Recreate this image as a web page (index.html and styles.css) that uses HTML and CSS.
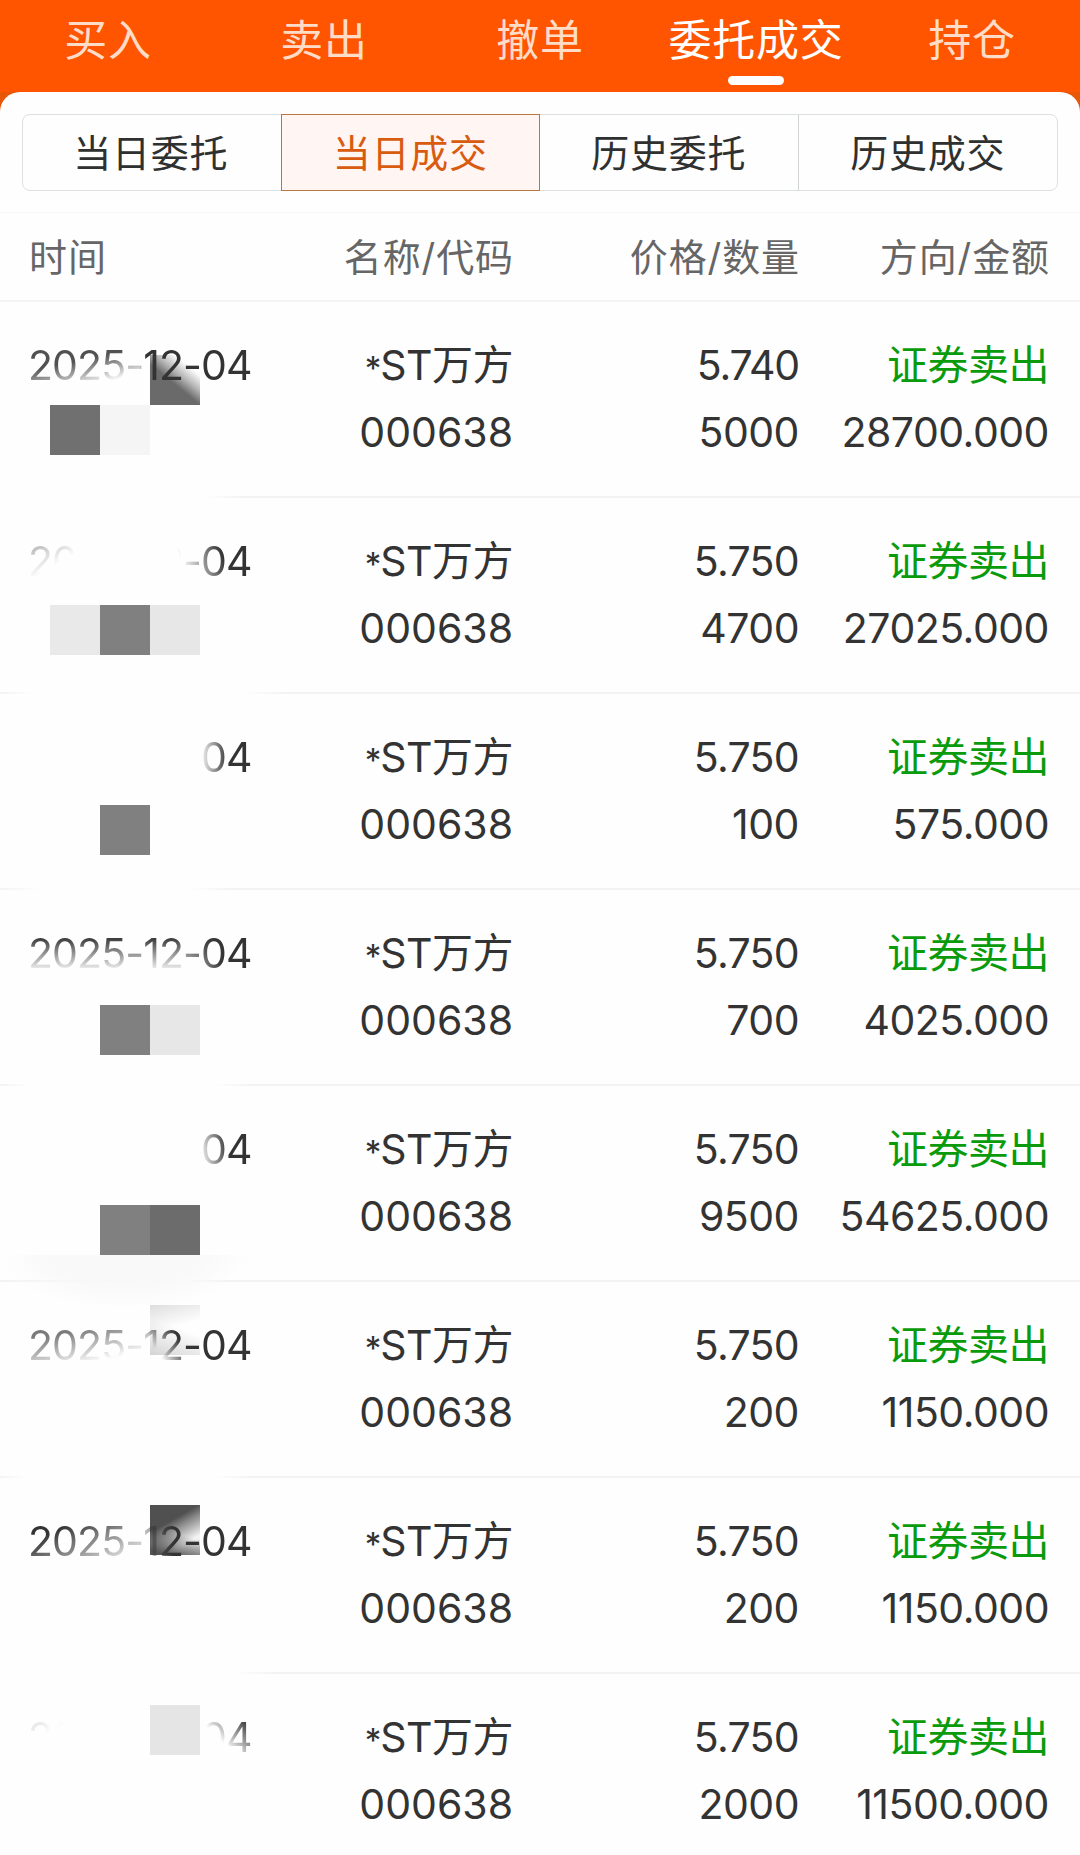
FILE: index.html
```html
<!DOCTYPE html>
<html lang="zh-CN">
<head>
    <meta charset="UTF-8">
    <meta name="viewport" content="width=device-width, initial-scale=1.0">
    <title>委托成交</title>
    <link rel="stylesheet" href="styles.css">
</head>
<body>
    <header>
        <nav class="nav">
            <a>买入</a>
            <a>卖出</a>
            <a>撤单</a>
            <a class="current">委托成交</a>
            <a>持仓</a>
        </nav>
    </header>

    <main>
        <div class="tabs">
            <button>当日委托</button>
            <button class="active">当日成交</button>
            <button>历史委托</button>
            <button>历史成交</button>
        </div>

        <div class="grid table-head">
            <span>时间</span>
            <span>名称/代码</span>
            <span>价格/数量</span>
            <span>方向/金额</span>
        </div>

        <div class="table">
            <!-- mosaic blocks that hide the exact times -->
            <div class="mosaic">
                <i class="m1"></i>
                <i class="m2"></i>
                <i class="m3"></i>
                <i class="m4"></i>
                <i class="m5"></i>
                <i class="m6"></i>
                <i class="m7"></i>
                <i class="m8"></i>
                <i class="m9"></i>
                <i class="m10"></i>
                <i class="m11"></i>
                <i class="m12"></i>
                <i class="m13"></i>
                <i class="m14"></i>
                <i class="m15"></i>
            </div>

            <div class="grid row r1">
                <div><span class="date">2025-12-04</span></div>
                <div><span class="star">*</span>ST万方<br><span class="code">000638</span></div>
                <div><span class="price">5.740</span><br>5000</div>
                <div><span class="sell">证券卖出</span><br>28700.000</div>
            </div>
            <div class="grid row r2">
                <div><span class="date">2025-12-04</span></div>
                <div><span class="star">*</span>ST万方<br><span class="code">000638</span></div>
                <div><span class="price">5.750</span><br>4700</div>
                <div><span class="sell">证券卖出</span><br>27025.000</div>
            </div>
            <div class="grid row r3">
                <div><span class="date">2025-12-04</span></div>
                <div><span class="star">*</span>ST万方<br><span class="code">000638</span></div>
                <div><span class="price">5.750</span><br>100</div>
                <div><span class="sell">证券卖出</span><br>575.000</div>
            </div>
            <div class="grid row r4">
                <div><span class="date">2025-12-04</span></div>
                <div><span class="star">*</span>ST万方<br><span class="code">000638</span></div>
                <div><span class="price">5.750</span><br>700</div>
                <div><span class="sell">证券卖出</span><br>4025.000</div>
            </div>
            <div class="grid row r5">
                <div><span class="date">2025-12-04</span></div>
                <div><span class="star">*</span>ST万方<br><span class="code">000638</span></div>
                <div><span class="price">5.750</span><br>9500</div>
                <div><span class="sell">证券卖出</span><br>54625.000</div>
            </div>
            <div class="grid row r6">
                <div><span class="date">2025-12-04</span></div>
                <div><span class="star">*</span>ST万方<br><span class="code">000638</span></div>
                <div><span class="price">5.750</span><br>200</div>
                <div><span class="sell">证券卖出</span><br>1150.000</div>
            </div>
            <div class="grid row r7">
                <div><span class="date">2025-12-04</span></div>
                <div><span class="star">*</span>ST万方<br><span class="code">000638</span></div>
                <div><span class="price">5.750</span><br>200</div>
                <div><span class="sell">证券卖出</span><br>1150.000</div>
            </div>
            <div class="grid row r8">
                <div><span class="date">2025-12-04</span></div>
                <div><span class="star">*</span>ST万方<br><span class="code">000638</span></div>
                <div><span class="price">5.750</span><br>2000</div>
                <div><span class="sell">证券卖出</span><br>11500.000</div>
            </div>
        </div>
    </main>
</body>
</html>
```
FILE: styles.css
```css
* {
    box-sizing: border-box;
}

body {
    margin: 0;
    height: 1855px;
    overflow: hidden;
    background-color: #e85608;
    font-family: Inter, "Noto Sans CJK SC", sans-serif;
    color: #333;
}

header {
    height: 92px;
    background-color: #ff5500;
}

.nav {
    display: grid;
    grid-template-columns: repeat(5, 1fr);
    text-align: center;
}

.nav a {
    position: relative;
    height: 92px;
    line-height: 80px;
    font-size: 43px;
    letter-spacing: 0.7px;
    color: #ffdcc8;
}

.nav .current {
    color: #fff;
}

.nav .current::after {
    content: "";
    position: absolute;
    left: 50%;
    bottom: 7px;
    width: 56px;
    height: 9px;
    margin-left: -28px;
    border-radius: 5px;
    background-color: #fff;
}

main {
    height: 1763px;
    padding-top: 22px;
    background-color: #fefefe;
    border-radius: 20px 20px 0 0;
    overflow: hidden;
}

.tabs {
    display: grid;
    grid-template-columns: repeat(4, 1fr);
    height: 77px;
    margin: 0 22px 21px;
    border: 1px solid #dcdfdf;
    border-radius: 8px;
}

.tabs button {
    padding: 0 0 5px;
    border: 0;
    border-right: 1px solid #d0d3d3;
    background: none;
    font-family: inherit;
    font-size: 38px;
    letter-spacing: 0.8px;
    color: #2f3131;
}

.tabs button:first-child,
.tabs button:last-child {
    border-right: 0;
}

.tabs button:first-child {
    padding-right: 3px;
}

.tabs .active {
    margin: -1px 0 -1px -1px;
    border: 1px solid #b9773f;
    background-color: #fff6f3;
    color: #d95b10;
}

.grid {
    display: grid;
    grid-template-columns: 228px 257px 286px 250px;
    padding: 0 31px 0 28px;
    text-align: right;
}

.grid > :first-child {
    text-align: left;
}

.table-head {
    height: 90px;
    padding-left: 29px;
    padding-right: 30px;
    border-top: 1px solid #f7f7f7;
    border-bottom: 2px solid #f4f4f4;
    line-height: 88px;
    font-size: 38px;
    letter-spacing: 0.9px;
    color: #666;
}

.table {
    position: relative;
}

.row {
    position: relative;
    height: 196px;
    padding-top: 30px;
    font-size: 41px;
    line-height: 67px;
    letter-spacing: -0.5px;
    white-space: nowrap;
    --line: linear-gradient(to right, transparent 205px, #f3f3f3 240px);
    background: var(--line) left bottom / 100% 2px no-repeat;
}

.star {
    font-size: 33px;
    line-height: 1;
    letter-spacing: -1px;
}

.code {
    letter-spacing: 0;
}

.price {
    letter-spacing: -0.7px;
}

.r1 .price {
    letter-spacing: -1.2px;
}

.sell {
    color: #099b0b;
}

.date {
    display: inline-block;
    width: 226px;
    height: 67px;
    letter-spacing: -0.9px;
    -webkit-mask-image: var(--fade);
    mask-image: var(--fade);
}

/* how far each date is wiped out */
.r1 {
    --fade: linear-gradient(to right, transparent 112px, #000 116px),
            linear-gradient(168deg, rgba(0, 0, 0, 0.85) 34%, transparent 58%);
}

.r2 {
    --line: linear-gradient(to right, #f3f3f3 0, transparent 32px, transparent 245px, #f3f3f3 285px);
    --fade: linear-gradient(72deg, transparent 66%, #000 84%),
            linear-gradient(150deg, rgba(0, 0, 0, 0.45) 5%, transparent 27%);
}

.r3 {
    --line: linear-gradient(to right, #f3f3f3 0, transparent 40px, transparent 190px, #f3f3f3 230px);
    --fade: linear-gradient(to right, transparent 172px, #000 200px);
}

.r4 {
    --line: linear-gradient(to right, #f3f3f3 0, transparent 30px, transparent 215px, #f3f3f3 250px);
    --fade: linear-gradient(to right, transparent 155px, #000 195px),
            linear-gradient(to bottom, rgba(0, 0, 0, 0.95) 28%, rgba(0, 0, 0, 0.1) 72%);
}

.r5 {
    --line: linear-gradient(to right, #f3f3f3 0, #f7f7f7 60px, #f9f9f9 190px, #f3f3f3 230px);
    --fade: linear-gradient(80deg, transparent 74%, #000 87%);
}

.r6 {
    --line: linear-gradient(to right, #f3f3f3 0, transparent 25px, transparent 215px, #f3f3f3 250px);
    --fade: linear-gradient(60deg, transparent 55%, #000 66%),
            linear-gradient(168deg, rgba(0, 0, 0, 0.65) 25%, transparent 56%);
}

.r7 {
    --line: linear-gradient(to right, transparent 235px, #f3f3f3 275px);
    --fade: linear-gradient(to right, transparent 120px, #000 145px),
            linear-gradient(155deg, #000 20%, rgba(0, 0, 0, 0.25) 50%, transparent 78%);
}

.r8 {
    --fade: linear-gradient(150deg, rgba(0, 0, 0, 0.2) 5%, transparent 21%),
            linear-gradient(45deg, transparent 76%, #000 92%);
}

.mosaic {
    position: absolute;
    left: 0;
    top: 53px;
    display: grid;
    grid-template-columns: repeat(5, 50px);
    grid-auto-rows: 50px;
}

.m1 { grid-area: 1 / 4; background: linear-gradient(39deg, #6a6a6a 45%, #b5b5b5 60%, transparent 78%); }
.m2 { grid-area: 2 / 2; background: #707070; }
.m3 { grid-area: 2 / 3; background: #f5f5f5; }
.m4 { grid-area: 6 / 2; background: #e9e9e9; }
.m5 { grid-area: 6 / 3; background: #808080; }
.m6 { grid-area: 6 / 4; background: #e7e7e7; }
.m7 { grid-area: 10 / 3; background: #808080; }
.m8 { grid-area: 14 / 3; background: #808080; }
.m9 { grid-area: 14 / 4; background: #e7e7e7; }
.m10 { grid-area: 18 / 3; background: #808080; }
.m11 { grid-area: 18 / 4; background: #6c6c6c; }
.m12 { grid-area: 19 / 1 / 20 / 6; background: radial-gradient(125px 55px at 50% 0, #f9f9f9 60%, transparent); }
.m13 { grid-area: 20 / 4; background: linear-gradient(165deg, #dedede, transparent 45%), linear-gradient(20deg, #d4d4d4, transparent 55%); }
.m14 { grid-area: 24 / 4; background: linear-gradient(15deg, #555 8%, transparent 45%), linear-gradient(150deg, #505050 35%, #8a8a8a 48%, #f4f4f4 75%, #e4e4e4 90%); }
.m15 { grid-area: 28 / 4; background: #e5e5e5; }
```
